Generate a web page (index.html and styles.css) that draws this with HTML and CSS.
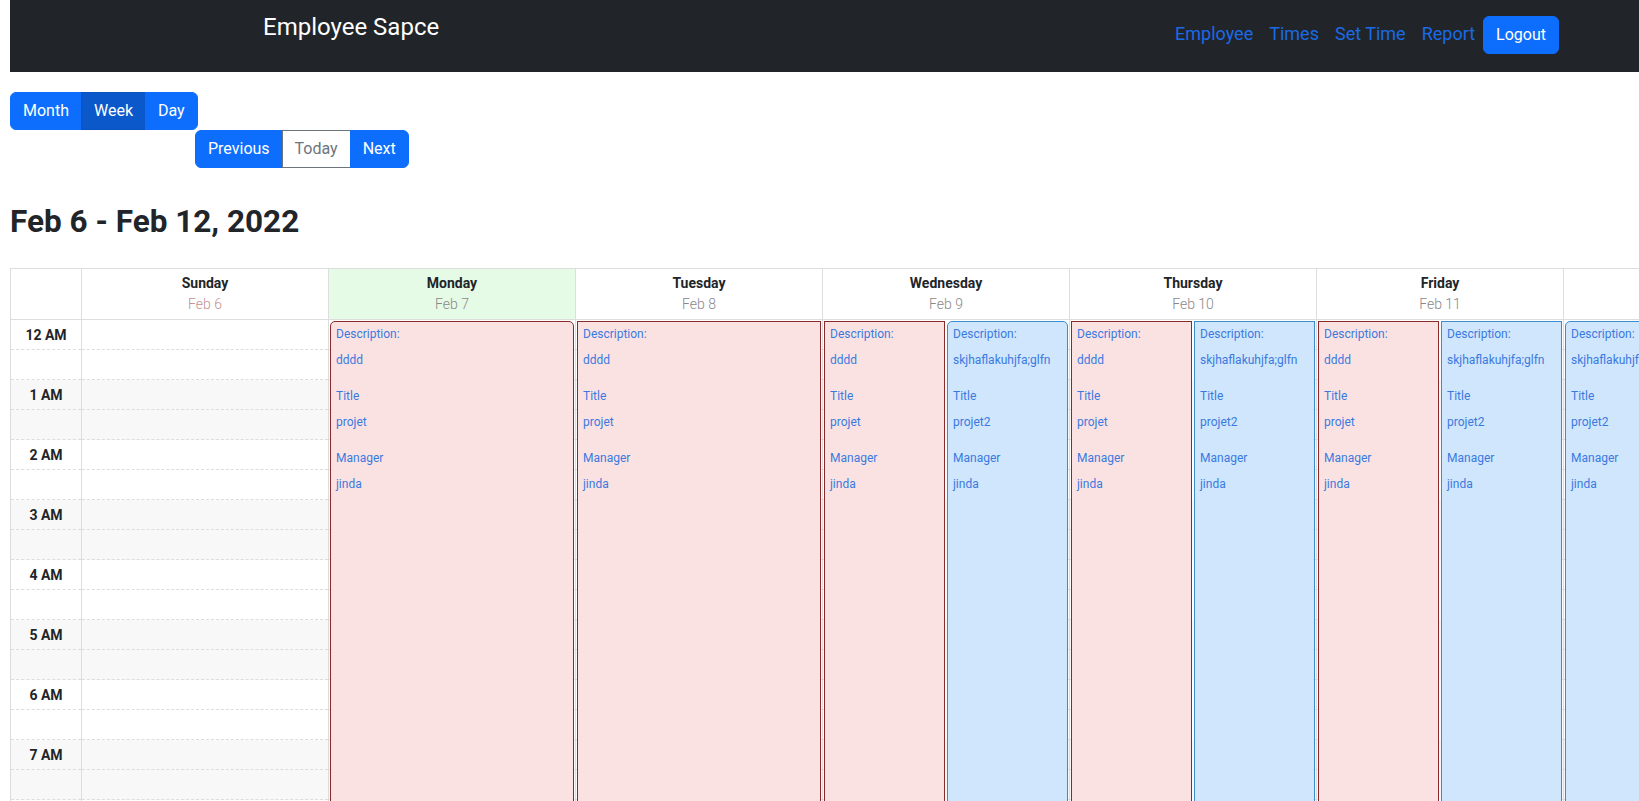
FILE: index.html
```html
<!DOCTYPE html>
<html lang="en">
<head>
<meta charset="utf-8">
<title>Employee Sapce</title>
<link rel="stylesheet" href="styles.css">
</head>
<body>
<div class="page">
  <nav class="navbar">
    <span class="brand">Employee Sapce</span>
    <div class="nav-right">
      <a class="nav-link">Employee</a>
      <a class="nav-link">Times</a>
      <a class="nav-link">Set Time</a>
      <a class="nav-link">Report</a>
      <button class="btn btn-primary btn-solo">Logout</button>
    </div>
  </nav>

  <div class="toolbar">
    <div class="btn-group">
      <button class="btn btn-primary">Month</button>
      <button class="btn btn-primary active">Week</button>
      <button class="btn btn-primary">Day</button>
    </div>
    <div class="btn-group btn-group-nav">
      <button class="btn btn-primary">Previous</button>
      <button class="btn btn-outline">Today</button>
      <button class="btn btn-primary">Next</button>
    </div>
  </div>

  <h2 class="range-title">Feb 6 - Feb 12, 2022</h2>

  <div class="cal">
    <div class="head-cell gutter-head"></div>
    <div class="head-cell day-head"><div class="day-name">Sunday</div><div class="day-date weekend">Feb 6</div></div>
    <div class="head-cell day-head today"><div class="day-name">Monday</div><div class="day-date">Feb 7</div></div>
    <div class="head-cell day-head"><div class="day-name">Tuesday</div><div class="day-date">Feb 8</div></div>
    <div class="head-cell day-head"><div class="day-name">Wednesday</div><div class="day-date">Feb 9</div></div>
    <div class="head-cell day-head"><div class="day-name">Thursday</div><div class="day-date">Feb 10</div></div>
    <div class="head-cell day-head"><div class="day-name">Friday</div><div class="day-date">Feb 11</div></div>
    <div class="head-cell day-head"><div class="day-name">Saturday</div><div class="day-date weekend">Feb 12</div></div>

    <div class="col gutter">
      <div class="hour"><div class="slot label">12 AM</div><div class="slot"></div></div>
      <div class="hour odd"><div class="slot label">1 AM</div><div class="slot"></div></div>
      <div class="hour"><div class="slot label">2 AM</div><div class="slot"></div></div>
      <div class="hour odd"><div class="slot label">3 AM</div><div class="slot"></div></div>
      <div class="hour"><div class="slot label">4 AM</div><div class="slot"></div></div>
      <div class="hour odd"><div class="slot label">5 AM</div><div class="slot"></div></div>
      <div class="hour"><div class="slot label">6 AM</div><div class="slot"></div></div>
      <div class="hour odd"><div class="slot label">7 AM</div><div class="slot"></div></div>
      <div class="hour"><div class="slot label">8 AM</div><div class="slot"></div></div>
    </div>

    <!-- Sunday -->
    <div class="col day">
      <div class="hour"><div class="slot"></div><div class="slot"></div></div>
      <div class="hour odd"><div class="slot"></div><div class="slot"></div></div>
      <div class="hour"><div class="slot"></div><div class="slot"></div></div>
      <div class="hour odd"><div class="slot"></div><div class="slot"></div></div>
      <div class="hour"><div class="slot"></div><div class="slot"></div></div>
      <div class="hour odd"><div class="slot"></div><div class="slot"></div></div>
      <div class="hour"><div class="slot"></div><div class="slot"></div></div>
      <div class="hour odd"><div class="slot"></div><div class="slot"></div></div>
      <div class="hour"><div class="slot"></div><div class="slot"></div></div>
    </div>

    <!-- Monday -->
    <div class="col day">
      <div class="hour"><div class="slot"></div><div class="slot"></div></div>
      <div class="hour odd"><div class="slot"></div><div class="slot"></div></div>
      <div class="hour"><div class="slot"></div><div class="slot"></div></div>
      <div class="hour odd"><div class="slot"></div><div class="slot"></div></div>
      <div class="hour"><div class="slot"></div><div class="slot"></div></div>
      <div class="hour odd"><div class="slot"></div><div class="slot"></div></div>
      <div class="hour"><div class="slot"></div><div class="slot"></div></div>
      <div class="hour odd"><div class="slot"></div><div class="slot"></div></div>
      <div class="hour"><div class="slot"></div><div class="slot"></div></div>
      <div class="events">
        <div class="event pink rounded">
          <div class="ev-label">Description:</div><div class="ev-value">dddd</div>
          <div class="ev-label">Title</div><div class="ev-value">projet</div>
          <div class="ev-label">Manager</div><div class="ev-value">jinda</div>
        </div>
      </div>
    </div>

    <!-- Tuesday -->
    <div class="col day">
      <div class="hour"><div class="slot"></div><div class="slot"></div></div>
      <div class="hour odd"><div class="slot"></div><div class="slot"></div></div>
      <div class="hour"><div class="slot"></div><div class="slot"></div></div>
      <div class="hour odd"><div class="slot"></div><div class="slot"></div></div>
      <div class="hour"><div class="slot"></div><div class="slot"></div></div>
      <div class="hour odd"><div class="slot"></div><div class="slot"></div></div>
      <div class="hour"><div class="slot"></div><div class="slot"></div></div>
      <div class="hour odd"><div class="slot"></div><div class="slot"></div></div>
      <div class="hour"><div class="slot"></div><div class="slot"></div></div>
      <div class="events">
        <div class="event pink">
          <div class="ev-label">Description:</div><div class="ev-value">dddd</div>
          <div class="ev-label">Title</div><div class="ev-value">projet</div>
          <div class="ev-label">Manager</div><div class="ev-value">jinda</div>
        </div>
      </div>
    </div>

    <!-- Wednesday -->
    <div class="col day">
      <div class="hour"><div class="slot"></div><div class="slot"></div></div>
      <div class="hour odd"><div class="slot"></div><div class="slot"></div></div>
      <div class="hour"><div class="slot"></div><div class="slot"></div></div>
      <div class="hour odd"><div class="slot"></div><div class="slot"></div></div>
      <div class="hour"><div class="slot"></div><div class="slot"></div></div>
      <div class="hour odd"><div class="slot"></div><div class="slot"></div></div>
      <div class="hour"><div class="slot"></div><div class="slot"></div></div>
      <div class="hour odd"><div class="slot"></div><div class="slot"></div></div>
      <div class="hour"><div class="slot"></div><div class="slot"></div></div>
      <div class="events">
        <div class="event pink">
          <div class="ev-label">Description:</div><div class="ev-value">dddd</div>
          <div class="ev-label">Title</div><div class="ev-value">projet</div>
          <div class="ev-label">Manager</div><div class="ev-value">jinda</div>
        </div>
        <div class="event blue rounded">
          <div class="ev-label">Description:</div><div class="ev-value">skjhaflakuhjfa;glfn</div>
          <div class="ev-label">Title</div><div class="ev-value">projet2</div>
          <div class="ev-label">Manager</div><div class="ev-value">jinda</div>
        </div>
      </div>
    </div>

    <!-- Thursday -->
    <div class="col day">
      <div class="hour"><div class="slot"></div><div class="slot"></div></div>
      <div class="hour odd"><div class="slot"></div><div class="slot"></div></div>
      <div class="hour"><div class="slot"></div><div class="slot"></div></div>
      <div class="hour odd"><div class="slot"></div><div class="slot"></div></div>
      <div class="hour"><div class="slot"></div><div class="slot"></div></div>
      <div class="hour odd"><div class="slot"></div><div class="slot"></div></div>
      <div class="hour"><div class="slot"></div><div class="slot"></div></div>
      <div class="hour odd"><div class="slot"></div><div class="slot"></div></div>
      <div class="hour"><div class="slot"></div><div class="slot"></div></div>
      <div class="events">
        <div class="event pink">
          <div class="ev-label">Description:</div><div class="ev-value">dddd</div>
          <div class="ev-label">Title</div><div class="ev-value">projet</div>
          <div class="ev-label">Manager</div><div class="ev-value">jinda</div>
        </div>
        <div class="event blue">
          <div class="ev-label">Description:</div><div class="ev-value">skjhaflakuhjfa;glfn</div>
          <div class="ev-label">Title</div><div class="ev-value">projet2</div>
          <div class="ev-label">Manager</div><div class="ev-value">jinda</div>
        </div>
      </div>
    </div>

    <!-- Friday -->
    <div class="col day">
      <div class="hour"><div class="slot"></div><div class="slot"></div></div>
      <div class="hour odd"><div class="slot"></div><div class="slot"></div></div>
      <div class="hour"><div class="slot"></div><div class="slot"></div></div>
      <div class="hour odd"><div class="slot"></div><div class="slot"></div></div>
      <div class="hour"><div class="slot"></div><div class="slot"></div></div>
      <div class="hour odd"><div class="slot"></div><div class="slot"></div></div>
      <div class="hour"><div class="slot"></div><div class="slot"></div></div>
      <div class="hour odd"><div class="slot"></div><div class="slot"></div></div>
      <div class="hour"><div class="slot"></div><div class="slot"></div></div>
      <div class="events">
        <div class="event pink">
          <div class="ev-label">Description:</div><div class="ev-value">dddd</div>
          <div class="ev-label">Title</div><div class="ev-value">projet</div>
          <div class="ev-label">Manager</div><div class="ev-value">jinda</div>
        </div>
        <div class="event blue">
          <div class="ev-label">Description:</div><div class="ev-value">skjhaflakuhjfa;glfn</div>
          <div class="ev-label">Title</div><div class="ev-value">projet2</div>
          <div class="ev-label">Manager</div><div class="ev-value">jinda</div>
        </div>
      </div>
    </div>

    <!-- Saturday -->
    <div class="col day">
      <div class="hour"><div class="slot"></div><div class="slot"></div></div>
      <div class="hour odd"><div class="slot"></div><div class="slot"></div></div>
      <div class="hour"><div class="slot"></div><div class="slot"></div></div>
      <div class="hour odd"><div class="slot"></div><div class="slot"></div></div>
      <div class="hour"><div class="slot"></div><div class="slot"></div></div>
      <div class="hour odd"><div class="slot"></div><div class="slot"></div></div>
      <div class="hour"><div class="slot"></div><div class="slot"></div></div>
      <div class="hour odd"><div class="slot"></div><div class="slot"></div></div>
      <div class="hour"><div class="slot"></div><div class="slot"></div></div>
      <div class="events">
        <div class="event blue rounded">
          <div class="ev-label">Description:</div><div class="ev-value">skjhaflakuhjfa;glfn</div>
          <div class="ev-label">Title</div><div class="ev-value">projet2</div>
          <div class="ev-label">Manager</div><div class="ev-value">jinda</div>
        </div>
      </div>
    </div>
  </div>
</div>
</body>
</html>
```

FILE: styles.css
```css
html, body {
  margin: 0;
  padding: 0;
  overflow: hidden;
}

body {
  font-family: Roboto, "Liberation Sans", sans-serif;
  color: #212529;
  background: #fff;
}

.page {
  padding-left: 10px;
  height: 801px;
  overflow: hidden;
}

/* Navbar */
.navbar {
  height: 72px;
  background: #212529;
  display: flex;
  align-items: flex-start;
  padding-left: 253px;
}

.brand {
  margin-top: 9px;
  font-size: 24px;
  line-height: 36px;
  color: #fff;
}

.nav-right {
  margin-left: auto;
  margin-right: 80px;
  margin-top: 16px;
  display: flex;
  align-items: center;
  height: 38px;
}

.nav-link {
  padding: 0 8px 4px;
  font-size: 18px;
  line-height: 27px;
  color: #1a6ae6;
  cursor: pointer;
}

/* Buttons */
.btn {
  font-family: Roboto, "Liberation Sans", sans-serif;
  font-size: 16px;
  line-height: 24px;
  padding: 6px 12px;
  border: 1px solid transparent;
  border-radius: 0;
  background: transparent;
  margin: 0;
  cursor: pointer;
}

.btn-primary {
  background: #0d6efd;
  border-color: #0d6efd;
  color: #fff;
}

.btn-primary.active {
  background: #0a58ca;
  border-color: #0a53be;
}

.btn-outline {
  background: #fff;
  border-color: #6c757d;
  color: #6c757d;
}

.btn-solo {
  border-radius: 6px;
}

.toolbar {
  margin-top: 20px;
}

.btn-group {
  display: flex;
  width: max-content;
}

.btn-group .btn + .btn {
  margin-left: -1px;
}

.btn-group .btn:first-child {
  border-top-left-radius: 6px;
  border-bottom-left-radius: 6px;
}

.btn-group .btn:last-child {
  border-top-right-radius: 6px;
  border-bottom-right-radius: 6px;
}

.btn-group-nav {
  margin-left: 185px;
}

/* Title */
.range-title {
  margin: 35px 0 0;
  font-size: 31.5px;
  font-weight: 700;
  line-height: 38px;
}

/* Calendar */
.cal {
  margin-top: 27px;
  display: grid;
  grid-template-columns: 70px repeat(7, 247px);
  width: max-content;
  border-top: 1px solid #ddd;
  border-left: 1px solid #ddd;
}

.head-cell {
  box-sizing: border-box;
  height: 51px;
  border-bottom: 1px solid #ddd;
  padding-top: 4px;
  text-align: center;
}

.day-head {
  border-left: 1px solid #ddd;
}

.day-head.today {
  background: #e6fbe6;
}

.day-name {
  font-size: 14px;
  font-weight: 700;
  line-height: 20px;
  color: #212529;
}

.day-date {
  font-size: 14px;
  font-weight: 300;
  line-height: 20px;
  margin-top: 1px;
  color: #888;
}

.day-date.weekend {
  color: #c48f8f;
}

.col {
  position: relative;
}

.col.day {
  border-left: 1px solid #ddd;
}

.hour.odd {
  background: #f8f8f8;
}

.slot {
  box-sizing: border-box;
  height: 30px;
  border-bottom: 1px dashed #ddd;
}

.slot.label {
  padding-top: 1px;
  font-size: 14px;
  font-weight: 700;
  line-height: 28px;
  text-align: center;
  color: #212529;
}

/* Events */
.events {
  position: absolute;
  top: 1px;
  left: 1px;
  right: 1px;
  bottom: 0;
  display: flex;
  gap: 2px;
}

.event {
  flex: 1 1 0;
  min-width: 0;
  box-sizing: border-box;
  padding: 2px 5px 0;
  border: 1px solid;
  font-size: 12px;
  color: #3a7ae0;
  overflow: hidden;
  white-space: nowrap;
}

.event.pink {
  background: #fae2e2;
  border-color: #8b2a2a;
}

.event.blue {
  background: #d0e6fc;
  border-color: #3d8ccf;
}

.event.rounded {
  border-radius: 5px;
}

.ev-label {
  line-height: 20px;
}

.ev-value {
  line-height: 20px;
  margin-top: 6px;
  margin-bottom: 16px;
}
```
